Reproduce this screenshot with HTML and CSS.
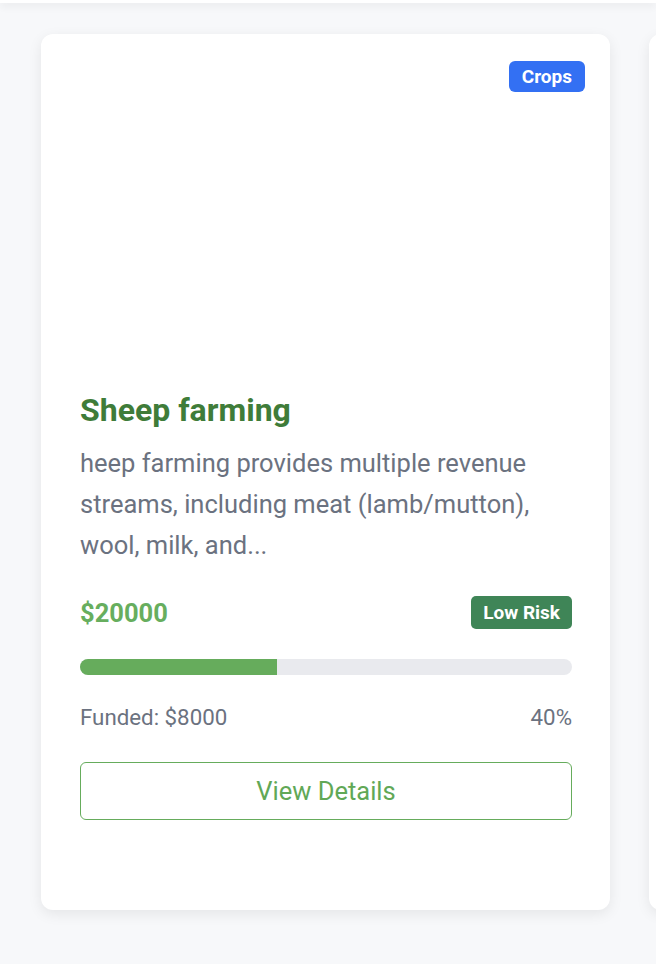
FILE: index.html
```html
<!DOCTYPE html>
<html lang="en">
<head>
<meta charset="utf-8">
<title>Projects</title>
<link rel="stylesheet" href="styles.css">
</head>
<body>
<div class="topbar"></div>
<main class="grid">
  <article class="card">
    <div class="media">
      <span class="tag">Crops</span>
    </div>
    <div class="body">
      <h3 class="title">Sheep farming</h3>
      <p class="desc">heep farming provides multiple revenue streams, including meat (lamb/mutton), wool, milk, and...</p>
      <div class="row price-row">
        <span class="price">$20000</span>
        <span class="risk">Low Risk</span>
      </div>
      <div class="bar"><div class="fill" style="width:40%"></div></div>
      <div class="row meta">
        <span>Funded: $8000</span>
        <span>40%</span>
      </div>
      <button class="btn">View Details</button>
    </div>
  </article>
  <article class="card"></article>
</main>
</body>
</html>
```
FILE: styles.css
```css
* { box-sizing: border-box; }
html, body { margin: 0; padding: 0; }
body {
  background: #f7f8fa;
  font-family: Roboto, "Liberation Sans", sans-serif;
  overflow: hidden;
  height: 964px;
}
.topbar {
  height: 3px;
  background: #fff;
  box-shadow: 0 2px 8px rgba(0,0,0,0.12);
  position: relative;
  z-index: 2;
}
.grid {
  display: flex;
  gap: 39px;
  padding: 31px 0 0 41px;
}
.card {
  flex: 0 0 569px;
  height: 876px;
  background: #fff;
  border-radius: 12px;
  box-shadow: 0 4px 14px rgba(0,0,0,0.08);
}
.media {
  position: relative;
  height: 330px;
}
.tag {
  position: absolute;
  top: 27px;
  right: 25px;
  background: #3370f3;
  color: #fff;
  font-weight: 700;
  font-size: 19px;
  line-height: 21px;
  padding: 5px 13px;
  border-radius: 6px;
}
.body {
  padding: 27px 38px 0 39px;
  display: flex;
  flex-direction: column;
}
.title {
  margin: 0;
  font-size: 32px;
  line-height: 38px;
  font-weight: 700;
  color: #3f7c39;
}
.desc {
  margin: 14px 0 0;
  font-size: 25.5px;
  line-height: 41px;
  color: #6b7280;
}
.row {
  display: flex;
  justify-content: space-between;
  align-items: center;
}
.price-row { margin-top: 30px; height: 33px; }
.price {
  font-size: 25.5px;
  font-weight: 700;
  color: #67ae5e;
}
.risk {
  background: #3f8557;
  color: #fff;
  font-weight: 700;
  font-size: 19px;
  line-height: 21px;
  padding: 6px 12px;
  border-radius: 5px;
}
.bar {
  margin-top: 30px;
  height: 16px;
  background: #e9eaee;
  border-radius: 8px;
  overflow: hidden;
}
.fill {
  height: 100%;
  background: #66ac5c;
}
.meta {
  margin-top: 29px;
  font-size: 22.3px;
  line-height: 26px;
  color: #6b7280;
}
.btn {
  margin-top: 32px;
  height: 58px;
  background: #fff;
  border: 1px solid #66ac5c;
  border-radius: 6px;
  color: #61a856;
  font-family: inherit;
  font-size: 25.5px;
}
```
